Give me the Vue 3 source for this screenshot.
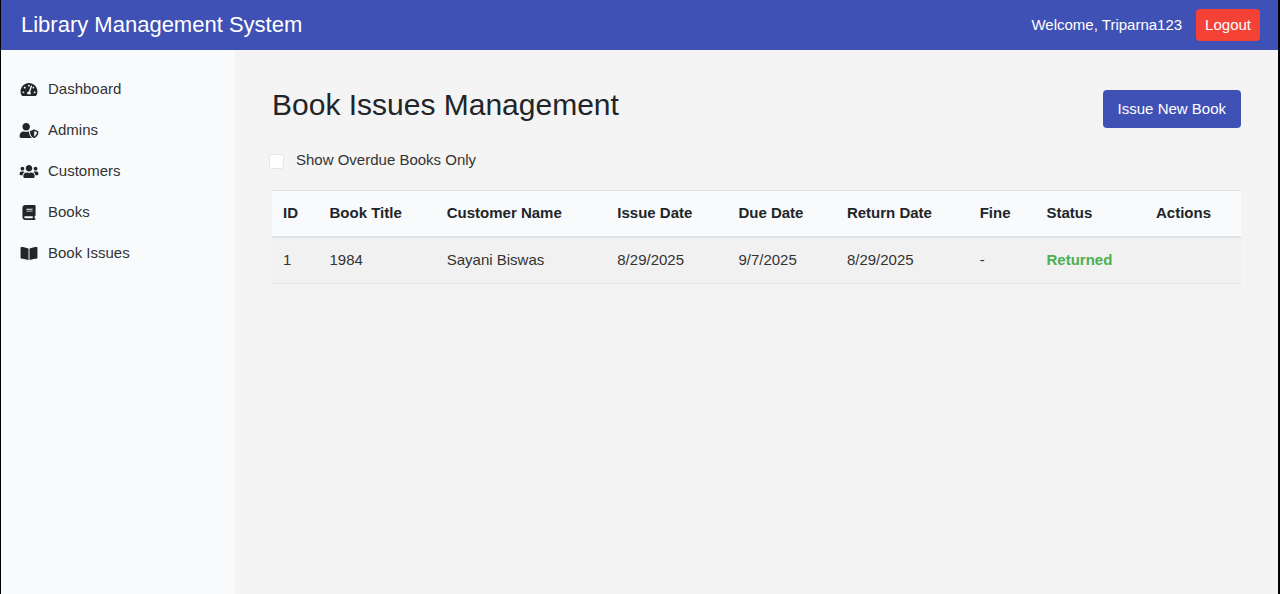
<script setup>
import { ref, computed } from 'vue'

const navItems = [
  {
    label: 'Dashboard',
    width: 576,
    path: 'M288 32C128.94 32 0 160.94 0 320c0 52.8 14.25 102.26 39.06 144.8 5.61 9.62 16.3 15.2 27.44 15.2h443c11.14 0 21.83-5.58 27.44-15.2C561.75 422.26 576 372.8 576 320c0-159.06-128.94-288-288-288zm0 64c14.71 0 26.58 10.13 30.32 23.65-1.11 2.26-2.64 4.23-3.45 6.67l-9.22 27.67c-5.13 3.49-10.97 6.01-17.64 6.01-17.67 0-32-14.33-32-32S270.33 96 288 96zM96 384c-17.67 0-32-14.33-32-32s14.33-32 32-32 32 14.33 32 32-14.33 32-32 32zm48-160c-17.67 0-32-14.33-32-32s14.33-32 32-32 32 14.33 32 32-14.33 32-32 32zm246.77-72.41l-61.33 184C343.13 347.33 352 364.54 352 384c0 11.72-3.38 22.55-8.88 32H232.88c-5.5-9.45-8.88-20.28-8.88-32 0-33.94 26.5-61.43 59.9-63.59l61.34-184.01c4.17-12.56 17.73-19.45 30.36-15.17 12.57 4.19 19.35 17.79 15.17 30.36zm14.66 57.2l15.52-46.55c3.47-1.29 7.13-2.23 11.05-2.23 17.67 0 32 14.33 32 32s-14.33 32-32 32c-11.38-.01-20.89-6.28-26.57-15.22zM480 384c-17.67 0-32-14.33-32-32s14.33-32 32-32 32 14.33 32 32-14.33 32-32 32z'
  },
  {
    label: 'Admins',
    width: 640,
    path: 'M622.3 271.1l-115.2-45c-4.1-1.6-12.6-3.7-22.2 0l-115.2 45c-10.7 4.2-17.7 14-17.7 24.9 0 111.6 68.7 188.8 132.9 213.9 9.6 3.7 18 1.6 22.2 0C558.4 489.9 640 420.5 640 296c0-10.9-7-20.7-17.7-24.9zM496 462.4V273.3l95.5 37.3c-5.6 87.1-60.9 135.4-95.5 151.8zM224 256c70.7 0 128-57.3 128-128S294.7 0 224 0 96 57.3 96 128s57.3 128 128 128zm96 40c0-2.5.8-4.8 1.1-7.2-2.5-.1-4.9-.8-7.5-.8h-16.7c-22.2 10.2-46.9 16-72.9 16s-50.6-5.8-72.9-16h-16.7C60.2 288 0 348.2 0 422.4V464c0 26.5 21.5 48 48 48h352c6.8 0 13.3-1.5 19.2-4-54-42.9-99.2-116.7-99.2-212z'
  },
  {
    label: 'Customers',
    width: 640,
    path: 'M96 224c35.3 0 64-28.7 64-64s-28.7-64-64-64-64 28.7-64 64 28.7 64 64 64zm448 0c35.3 0 64-28.7 64-64s-28.7-64-64-64-64 28.7-64 64 28.7 64 64 64zm32 32h-64c-17.6 0-33.5 7.1-45.1 18.6 40.3 22.1 68.9 62 75.1 109.4h66c17.7 0 32-14.3 32-32v-32c0-35.3-28.7-64-64-64zm-256 0c61.9 0 112-50.1 112-112S381.9 32 320 32 208 82.1 208 144s50.1 112 112 112zm76.8 32h-8.3c-20.8 10-43.9 16-68.5 16s-47.6-6-68.5-16h-8.3C179.6 288 128 339.6 128 403.2V432c0 26.5 21.5 48 48 48h288c26.5 0 48-21.5 48-48v-28.8c0-63.6-51.6-115.2-115.2-115.2zm-223.7-13.4C161.5 263.1 145.6 256 128 256H64c-35.3 0-64 28.7-64 64v32c0 17.7 14.3 32 32 32h65.9c6.3-47.4 34.9-87.3 75.2-109.4z'
  },
  {
    label: 'Books',
    width: 448,
    path: 'M96 0C43 0 0 43 0 96V416c0 53 43 96 96 96H384h32c17.7 0 32-14.3 32-32s-14.3-32-32-32V384c17.7 0 32-14.3 32-32V32c0-17.7-14.3-32-32-32H384 96zm0 384H352v64H96c-17.7 0-32-14.3-32-32s14.3-32 32-32zm32-240c0-8.8 7.2-16 16-16H336c8.8 0 16 7.2 16 16s-7.2 16-16 16H144c-8.8 0-16-7.2-16-16zm16 48H336c8.8 0 16 7.2 16 16s-7.2 16-16 16H144c-8.8 0-16-7.2-16-16s7.2-16 16-16z'
  },
  {
    label: 'Book Issues',
    width: 576,
    path: 'M542.22 32.05c-54.8 3.11-163.72 14.43-230.96 55.59-4.64 2.84-7.27 7.89-7.27 13.17v363.87c0 11.55 12.63 18.85 23.28 13.49 69.18-34.82 169.23-44.32 218.7-46.92 16.89-.89 30.02-14.43 30.02-30.66V62.75c.01-17.71-15.35-31.74-33.77-30.7zM264.73 87.64C197.5 46.48 88.58 35.17 33.78 32.05 15.36 31.01 0 45.04 0 62.75V400.6c0 16.24 13.13 29.78 30.02 30.66 49.49 2.6 149.59 12.11 218.77 46.95 10.62 5.35 23.21-1.94 23.21-13.46V100.63c0-5.29-2.62-10.14-7.27-12.99z'
  }
]

const columns = [
  { title: 'ID', share: 4.8 },
  { title: 'Book Title', share: 12.1 },
  { title: 'Customer Name', share: 17.6 },
  { title: 'Issue Date', share: 12.5 },
  { title: 'Due Date', share: 11.2 },
  { title: 'Return Date', share: 13.7 },
  { title: 'Fine', share: 6.9 },
  { title: 'Status', share: 11.3 },
  { title: 'Actions', share: 9.9 }
]

const issues = [
  {
    id: 1,
    book: '1984',
    customer: 'Sayani Biswas',
    issued: '8/29/2025',
    due: '9/7/2025',
    returned: '8/29/2025',
    fine: '-',
    status: 'Returned'
  }
]

const overdueOnly = ref(false)
const visibleIssues = computed(() =>
  overdueOnly.value ? issues.filter((i) => i.status === 'Overdue') : issues
)
</script>

<template>
  <div class="app">
    <header class="topbar">
      <div class="brand">Library Management System</div>
      <div class="session">
        <span>Welcome, Triparna123</span>
        <button type="button" class="btn btn-logout">Logout</button>
      </div>
    </header>
    <div class="body">
      <nav class="sidebar" aria-label="Main">
        <a v-for="item in navItems" :key="item.label" href="#" class="nav-link">
          <svg class="nav-icon" :viewBox="`0 0 ${item.width} 512`" aria-hidden="true">
            <path :d="item.path" />
          </svg>
          <span>{{ item.label }}</span>
        </a>
      </nav>
      <main class="content">
        <div class="page-head">
          <h1>Book Issues Management</h1>
          <button type="button" class="btn btn-primary">Issue New Book</button>
        </div>
        <div class="filter">
          <input id="overdue" v-model="overdueOnly" type="checkbox" />
          <label for="overdue">Show Overdue Books Only</label>
        </div>
        <table>
          <colgroup>
            <col v-for="c in columns" :key="c.title" :style="{ width: c.share + '%' }" />
          </colgroup>
          <thead>
            <tr>
              <th v-for="c in columns" :key="c.title" scope="col">{{ c.title }}</th>
            </tr>
          </thead>
          <tbody>
            <tr v-for="i in visibleIssues" :key="i.id">
              <td>{{ i.id }}</td>
              <td>{{ i.book }}</td>
              <td>{{ i.customer }}</td>
              <td>{{ i.issued }}</td>
              <td>{{ i.due }}</td>
              <td>{{ i.returned }}</td>
              <td>{{ i.fine }}</td>
              <td class="status">{{ i.status }}</td>
              <td></td>
            </tr>
          </tbody>
        </table>
      </main>
    </div>
  </div>
</template>

<style>
body {
  margin: 0;
  background: #f4f4f4;
}
</style>

<style scoped>
.app {
  box-sizing: border-box;
  min-height: 100vh;
  display: flex;
  flex-direction: column;
  border-left: 1px solid #000;
  border-right: 2px solid #000;
  background: #f4f4f4;
  color: #212529;
  font-family: "Liberation Sans", Arial, sans-serif;
  font-size: 15px;
  line-height: 24px;
}

.topbar {
  display: flex;
  justify-content: space-between;
  align-items: center;
  padding: 9px 18px 9px 20px;
  background: #3f51b5;
  color: #fff;
}

.brand {
  font-size: 22px;
}

.session {
  display: flex;
  align-items: center;
  gap: 14px;
}

.btn {
  border: 0;
  border-radius: 4px;
  color: #fff;
  font: inherit;
  cursor: pointer;
}

.btn-logout {
  padding: 4px 9px;
  background: #f44336;
}

.btn-primary {
  padding: 7px 15px;
  background: #3f51b5;
}

.body {
  flex: 1;
  display: flex;
}

.sidebar {
  box-sizing: border-box;
  flex: 0 0 234px;
  padding-top: 19px;
  background: #f8fafc;
}

.nav-link {
  display: flex;
  align-items: center;
  gap: 9px;
  padding: 8px 18px 9px;
  color: #333;
  text-decoration: none;
}

.nav-icon {
  width: 20px;
  height: 15px;
  fill: #212529;
}

.content {
  flex: 1;
  min-width: 0;
  padding: 40px 37px;
}

.page-head {
  display: flex;
  justify-content: space-between;
  align-items: flex-start;
}

h1 {
  margin: 0;
  font-size: 30px;
  line-height: 30px;
  font-weight: 400;
}

.filter {
  display: flex;
  align-items: center;
  gap: 12px;
  margin: 20px 0 18px -3px;
  color: #333;
}

.filter input {
  appearance: none;
  box-sizing: border-box;
  width: 15px;
  height: 15px;
  margin: 2px 0 0;
  border: 1px solid #e6e6e6;
  border-radius: 3px;
  background: #fff;
}

.filter input:checked {
  border-color: #3f51b5;
  background: #3f51b5;
}

table {
  width: 100%;
  table-layout: fixed;
  border-spacing: 0;
}

th,
td {
  padding: 10px 11px 11px;
  text-align: left;
}

th {
  border-top: 1px solid #dee2e6;
  border-bottom: 2px solid #dee2e6;
  background: #f8fafc;
}

td {
  border-bottom: 1px solid #e2e4e6;
  background: #f1f1f1;
  color: #333;
}

td.status {
  color: #4caf50;
  font-weight: 700;
}
</style>
